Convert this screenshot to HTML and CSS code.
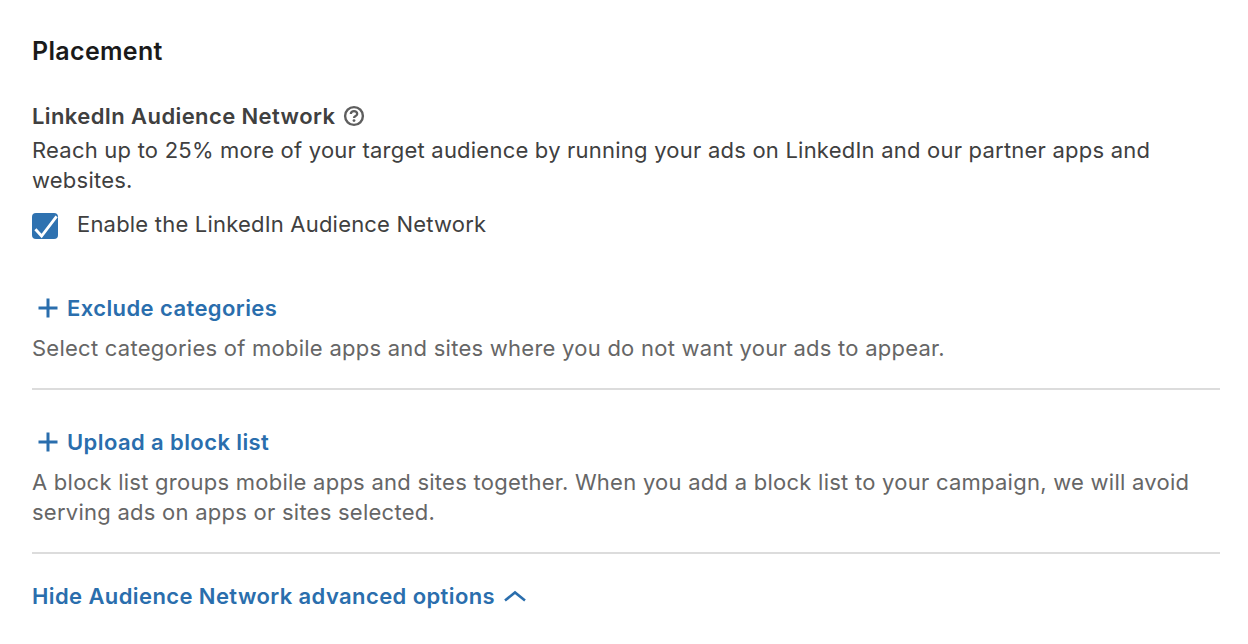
FILE: index.html
```html
<!DOCTYPE html>
<html lang="en">
<head>
<meta charset="utf-8">
<title>Placement</title>
<link rel="stylesheet" href="styles.css">
</head>
<body>
<main class="panel">
  <h2 class="title">Placement</h2>
  <div class="label-row">
    <span class="label">LinkedIn Audience Network</span>
    <svg class="help" width="22" height="22" viewBox="0 0 22 22"><circle cx="11" cy="11" r="8.9" fill="none" stroke="#5e5e5e" stroke-width="2.4"/><path d="M7.8 9a3.2 2.9 0 0 1 6.4 0c0 2.1-3.2 1.8-3.2 3.9" fill="none" stroke="#5e5e5e" stroke-width="2.3"/><circle cx="11" cy="15.6" r="1.4" fill="#5e5e5e"/></svg>
  </div>
  <p class="desc">Reach up to 25% more of your target audience by running your ads on LinkedIn and our partner apps and websites.</p>
  <div class="check-row">
    <svg class="check" width="26" height="26" viewBox="0 0 26 26"><rect width="26" height="26" rx="4" fill="#2f72b0"/><path d="M3.4 16.2l6.2 6.8L24.6 3.4" fill="none" stroke="#fff" stroke-width="2.8"/></svg>
    <span class="check-text">Enable the LinkedIn Audience Network</span>
  </div>
  <section class="block first">
    <div class="action"><svg class="plus" width="20" height="20" viewBox="0 0 20 20"><path d="M10 0.5v19M0.5 10h19" stroke="#2a6ead" stroke-width="3"/></svg><span>Exclude categories</span></div>
    <p class="muted">Select categories of mobile apps and sites where you do not want your ads to appear.</p>
  </section>
  <section class="block last">
    <div class="action"><svg class="plus" width="20" height="20" viewBox="0 0 20 20"><path d="M10 0.5v19M0.5 10h19" stroke="#2a6ead" stroke-width="3"/></svg><span>Upload a block list</span></div>
    <p class="muted">A block list groups mobile apps and sites together. When you add a block list to your campaign, we will avoid serving ads on apps or sites selected.</p>
  </section>
  <div class="toggle"><span>Hide Audience Network advanced options</span><svg width="22" height="12" viewBox="0 0 22 12"><path d="M1 10.5L11 2.5l10 8" fill="none" stroke="#2a6ead" stroke-width="2.6"/></svg></div>
</main>
</body>
</html>
```
FILE: styles.css
```css
* { box-sizing: border-box; }
html, body { margin: 0; background: #fff; }
body { font-family: Inter, "Liberation Sans", Arial, sans-serif; font-size: 22px; line-height: 30px; color: #404040; }
.panel { padding: 36px 28px 0 32px; width: 1248px; height: 644px; overflow: hidden; }
.title { margin: 0; font-size: 25px; line-height: 30px; font-weight: 600; letter-spacing: 0.33px; color: #1a1a1a; }
.label-row { margin-top: 35px; display: flex; align-items: center; gap: 8px; height: 30px; }
.label { font-weight: 600; letter-spacing: 0.4px; }
.desc { margin: 4px 0 0; letter-spacing: 0.22px; }
.check-row { margin-top: 14px; display: flex; align-items: center; gap: 19px; height: 30px; letter-spacing: 0.2px; }
.check { margin-top: 3px; }
.block { border-bottom: 2px solid #dcdcdc; padding-bottom: 25px; margin-bottom: 37px; }
.block.first { margin-top: 54px; }
.block.last { margin-bottom: 27px; }
.action { display: flex; align-items: center; gap: 9px; font-weight: 600; letter-spacing: 0.41px; color: #2a6ead; }
.plus { margin-left: 6px; }
.muted { margin: 10px 0 0; color: #666; letter-spacing: 0.25px; }
.toggle { display: flex; align-items: center; gap: 9px; font-weight: 600; letter-spacing: 0.4px; color: #2a6ead; }
```
